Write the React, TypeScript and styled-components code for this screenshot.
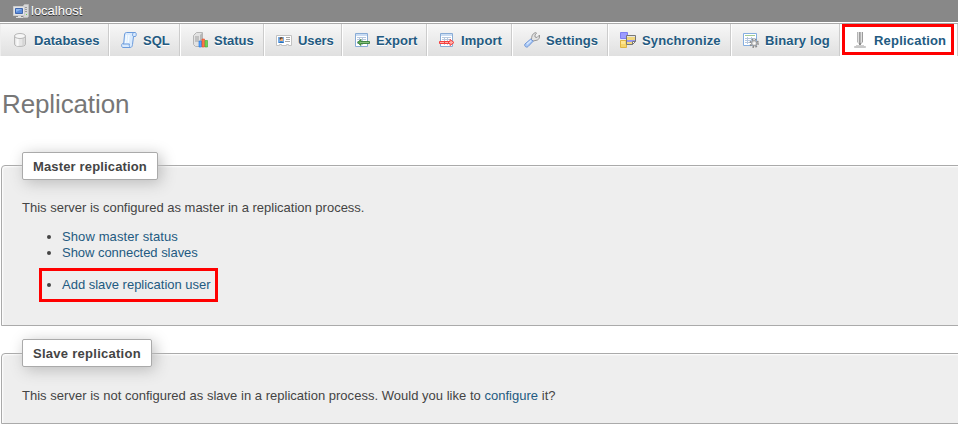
import React from 'react';
import styled, { createGlobalStyle } from 'styled-components';

const GlobalStyle = createGlobalStyle`
  * { box-sizing: border-box; }
  body {
    margin: 0;
    background: #fff;
    color: #444;
    font: 13px/16px "Liberation Sans", Arial, sans-serif;
    overflow: hidden;
  }
`;

const Page = styled.div`
  width: 958px;
  height: 430px;
  overflow: hidden;
`;

const ServerBar = styled.header`
  display: flex;
  align-items: center;
  height: 22px;
  padding: 0 0 0 13px;
  background: #888;
  color: #fff;
  text-shadow: 0 1px 0 #333;

  svg { margin-right: 2px; }
`;

const TabBar = styled.nav`
  display: grid;
  grid-template-columns: 109px 71px 84px 78px 85px 85px 96px 123px 109px 118px;
  height: 33px;
  margin-top: 1px;
  border-top: 1px solid #aaa;
  overflow: hidden;
`;

const Tab = styled.a<{ $active?: boolean }>`
  position: relative;
  display: flex;
  align-items: center;
  height: 32px;
  padding-left: 11px;
  border-left: 1px solid #fff;
  border-right: 1px solid #ccc;
  background: ${p => (p.$active ? '#fff' : 'linear-gradient(#f7f7f7, #e0e0e0)')};
  color: #235a81;
  font-weight: bold;
  text-shadow: 0 1px 0 #fff;
  white-space: nowrap;

  &:first-child { border-left-color: #eee; }

  svg { flex: none; margin-right: 6px; }
`;

const TabLabel = styled.span<{ $spacing: number }>`
  padding-top: 2px;
  letter-spacing: ${p => p.$spacing}px;
`;

const TabHighlight = styled.span`
  position: absolute;
  top: 0;
  left: 1px;
  width: 112px;
  height: 31px;
  border: 3px solid #f00;
`;

const Title = styled.h2`
  margin: 32px 0 0 2px;
  height: 32px;
  color: #777;
  font-size: 26px;
  font-weight: normal;
  line-height: 32px;
  letter-spacing: -0.12px;
`;

const Panel = styled.section<{ $height: number; $gap: number }>`
  height: ${p => p.$height}px;
  margin: ${p => p.$gap}px -10px 0 1px;
  padding: 0 20px;
  border: 1px solid #aaa;
  border-radius: 4px 4px 0 0;
  background: #eee;
  box-shadow: 1px 1px 2px #fff inset;
`;

const Legend = styled.h3<{ $width: number; $rise: number; $spacing: number }>`
  width: ${p => p.$width}px;
  height: 28px;
  margin: -${p => p.$rise}px 0 ${p => p.$rise - 14}px;
  padding: 6px 10px 4px;
  border: 1px solid #aaa;
  border-radius: 2px;
  background: #fff;
  box-shadow: 3px 3px 15px #bbb;
  font-size: 13px;
  line-height: 16px;
  letter-spacing: ${p => p.$spacing}px;
  white-space: nowrap;
`;

const Paragraph = styled.p<{ $spacing?: number }>`
  margin: 0;
  padding-top: 20px;
  letter-spacing: ${p => p.$spacing ?? 0}px;
`;

const Links = styled.ul`
  margin: 13px 0 0;
  padding: 0;
  list-style: none;
`;

const LinkItem = styled.li`
  display: flex;
  align-items: center;
  height: 16px;
  padding-left: 25px;

  &::before {
    content: '';
    width: 4px;
    height: 4px;
    margin: 0 11px 0 0;
    border-radius: 50%;
    background: #444;
  }
`;

const HighlightedItem = styled(LinkItem)`
  width: 179px;
  height: 34px;
  margin: 7px 0 0 17px;
  padding-left: 5px;
  border: 3px solid #f00;
`;

const Link = styled.a<{ $spacing?: number }>`
  color: #235a81;
  letter-spacing: ${p => (p.$spacing === undefined ? 'inherit' : `${p.$spacing}px`)};
`;

const Icon = ({ children }: { children: React.ReactNode }) => (
  <svg width="16" height="16" viewBox="0 0 16 16" fill="none">{children}</svg>
);

const ServerIcon = () => (
  <Icon>
    <path d="M10.5 2.5l1-1h4v12l-1 1h-4z" fill="#d8d8d8" stroke="#bbb" />
    <path d="M12 4.5h2M12 6.5h2M12 8.5h2" stroke="#999" />
    <path d="M13 11h1v1h-1z" fill="#6bd34c" />
    <path d="M.5 3.5h11v9H.5z" fill="#e4e4e4" stroke="#ccc" />
    <path d="M2.5 5.5h7v5h-7z" fill="#5a8bdb" stroke="#3f66ae" />
    <path d="M3 6h6L3 9z" fill="#8ab5ee" />
    <path d="M5 13h3v1h2v1H3v-1h2z" fill="#ddd" />
  </Icon>
);

const DatabaseIcon = () => (
  <Icon>
    <path d="M2.5 4v8.2c0 3 11 3 11 0V4z" fill="#e6e6e6" stroke="#b8b8b8" />
    <path d="M5 6v8M6 6v8" stroke="#fff" />
    <path d="M11 6v8M12 6v7" stroke="#cfcfcf" />
    <ellipse cx="8" cy="4" rx="5.5" ry="2.5" fill="#f6f6f6" stroke="#b8b8b8" />
  </Icon>
);

const ScrollIcon = () => (
  <Icon>
    <path d="M3.5 3C3.6 1.3 4.4.5 5.5.5h9c1 .8 1 3 0 4h-2l-1 8c-.2 1.8-.9 3-2 3H1.7C.2 15 .2 12 1.7 11.5h1z" fill="#d9eafd" stroke="#6b9bdc" />
    <path d="M12.3 4.5c-1-.8-1-2.6 0-3.6M2 12h6.5c-.5 1-.3 2.2.5 3" stroke="#6b9bdc" />
    <path d="M5.5 3l-.9 8M8 3l-.9 8" stroke="#f5fbff" strokeWidth="1.5" />
  </Icon>
);

const StatusIcon = () => (
  <Icon>
    <path d="M1.5 3.5l3-3h6v11l-3 3h-4l-2-2z" fill="#e2e2e2" stroke="#b5b5b5" />
    <path d="M3 5h4M3 7h4M3 9h4" stroke="#a0a0a0" />
    <path d="M8 3l2-2v11l-2 1z" fill="#b8b8b8" />
    <path d="M7 9h2.5v6H7z" fill="#57a3ff" stroke="#2277db" strokeWidth=".6" />
    <path d="M10 7h2.5v8H10z" fill="#ff7848" stroke="#e44a28" strokeWidth=".6" />
    <path d="M13 8.5h2.5V15H13z" fill="#74d454" stroke="#3faa33" strokeWidth=".6" />
  </Icon>
);

const UserCardIcon = () => (
  <Icon>
    <path d="M.5 3.5h15v10h-3v-1h-2v1h-5v-1h-2v1h-3z" fill="#fff" stroke="#c2c2c2" />
    <path d="M2 5h6v6H2z" fill="#79ade6" />
    <path d="M4 6h3v3H4z" fill="#efb078" />
    <path d="M3.5 6C4 4.8 7 4.8 7 6.5H5.5L4 8z" fill="#684126" />
    <path d="M3 11c0-2 4-2 5 0z" fill="#2870b9" />
    <path d="M10 5.5h4M10 7.5h4M9 9.5h5" stroke="#a8a8a8" />
  </Icon>
);

const Sheet = () => (
  <>
    <path d="M1.5 1.5h12v13h-12z" fill="#fff" stroke="#88abd5" />
    <path d="M2 3h11" stroke="#c9dcf3" strokeWidth="2" />
    <path d="M3 5.5h9M3 7.5h9M3 9.5h9M3 11.5h9M5.5 5v8M8.5 5v8" stroke="#b8c9de" />
  </>
);

const ExportIcon = () => (
  <Icon>
    <Sheet />
    <path d="M3.5 10.5l3.5-3v2h8.5v2H7v2z" fill="#5ca653" stroke="#2f7a30" strokeWidth=".8" />
    <path d="M6 10.5h9" stroke="#9bcf8e" strokeWidth=".7" />
  </Icon>
);

const ImportIcon = () => (
  <Icon>
    <Sheet />
    <path d="M.5 9.5h10.500v-2l4 3-4 3v-2H.5z" fill="#ffb0a8" stroke="#f54040" />
    <path d="M5 10.5h1M9 10.5h1" stroke="#f54040" />
  </Icon>
);

const WrenchIcon = () => (
  <Icon>
    <path d="M7.5 7.5c0-3 .8-6 4-7l1 .5L11 3v2l2 .5L15.5 3v2c-.3 2-1.5 3.2-3.5 3.4L9 9z" fill="#e3e3e3" stroke="#999" />
    <path d="M6.8 7l2.4 2.200-5.2 5.400C2.300 16.200-.3 13.700 1 12z" fill="#a9c9f6" stroke="#6f94d4" />
    <path d="M2.8 12.2L7 8.6" stroke="#d7e8ff" strokeWidth="1.3" />
  </Icon>
);

const SynchronizeIcon = () => (
  <Icon>
    <path d="M.5.5h7v6h-7z" fill="#9c9cff" stroke="#7f7ff0" />
    <path d="M.5 8.5h6v7h-6z" fill="#f6d66b" stroke="#dfb545" />
    <path d="M1 9h4v3H1z" fill="#ffe591" />
    <path d="M6.5 3.5h9v6l-3 3h-6z" fill="#f1d77d" stroke="#777" />
    <path d="M7 4.5h8" stroke="#e6e6e6" />
    <path d="M7 8h8v2H7z" fill="#9494f2" />
    <path d="M12.5 12.5v-3h3z" fill="#fff" stroke="#777" />
  </Icon>
);

const BinaryLogIcon = () => (
  <Icon>
    <path d="M.5 1.5h13v12H.5z" fill="#fff" stroke="#84aee0" />
    <path d="M2 3.5h10" stroke="#a4cc93" />
    <path d="M2 6.5h10M2 8.5h10M2 10.5h10M4.5 5v7M8.5 5v7" stroke="#b5c7de" />
    <circle cx="11.2" cy="11.2" r="3.8" stroke="#8a8a8a" strokeWidth="1.8" strokeDasharray="1.6 1.4" />
    <circle cx="11.2" cy="11.2" r="2.6" fill="#ddd" stroke="#999" />
    <circle cx="11.2" cy="11.2" r="1" fill="#fff" />
  </Icon>
);

const ReplicationIcon = () => (
  <Icon>
    <path d="M5.5 0v10l2 2" stroke="#b5b5b5" />
    <path d="M6.5 0v10M9.5 0v10" stroke="#e0e0e0" />
    <path d="M7.5 0v12M10.5 0v10l-2 2" stroke="#9c9c9c" />
    <path d="M8.5 0v12" stroke="#b5b5b5" />
    <path d="M7 11h2v3H7z" fill="#8c8c8c" />
    <path d="M4 13.5h8" stroke="#d0d0d0" />
    <path d="M2.5 14.5h11v1h-11z" fill="#ddd" stroke="#b8b8b8" strokeWidth=".7" />
  </Icon>
);

const tabs = [
  { label: 'Databases', icon: <DatabaseIcon />, spacing: 0.05 },
  { label: 'SQL', icon: <ScrollIcon />, spacing: 0 },
  { label: 'Status', icon: <StatusIcon />, spacing: 0 },
  { label: 'Users', icon: <UserCardIcon />, spacing: -0.1 },
  { label: 'Export', icon: <ExportIcon />, spacing: 0.05 },
  { label: 'Import', icon: <ImportIcon />, spacing: 0.1 },
  { label: 'Settings', icon: <WrenchIcon />, spacing: 0.1 },
  { label: 'Synchronize', icon: <SynchronizeIcon />, spacing: 0.12 },
  { label: 'Binary log', icon: <BinaryLogIcon />, spacing: 0.12 },
  { label: 'Replication', icon: <ReplicationIcon />, spacing: 0.2, active: true },
];

export default function App() {
  return (
    <Page>
      <GlobalStyle />
      <ServerBar><ServerIcon />localhost</ServerBar>
      <TabBar>
        {tabs.map(tab => (
          <Tab key={tab.label} $active={tab.active}>
            {tab.icon}
            <TabLabel $spacing={tab.spacing}>{tab.label}</TabLabel>
            {tab.active && <TabHighlight />}
          </Tab>
        ))}
      </TabBar>
      <Title>Replication</Title>
      <Panel $height={161} $gap={45}>
        <Legend $width={136} $rise={14} $spacing={0.15}>Master replication</Legend>
        <Paragraph>This server is configured as master in a replication process.</Paragraph>
        <Links>
          <LinkItem><Link $spacing={0.1}>Show master status</Link></LinkItem>
          <LinkItem><Link $spacing={-0.04}>Show connected slaves</Link></LinkItem>
          <HighlightedItem><Link $spacing={-0.01}>Add slave replication user</Link></HighlightedItem>
        </Links>
      </Panel>
      <Panel $height={71} $gap={27}>
        <Legend $width={130} $rise={15} $spacing={0.27}>Slave replication</Legend>
        <Paragraph $spacing={0.02}>
          This server is not configured as slave in a replication process. Would you like to <Link>configure</Link> it?
        </Paragraph>
      </Panel>
    </Page>
  );
}
